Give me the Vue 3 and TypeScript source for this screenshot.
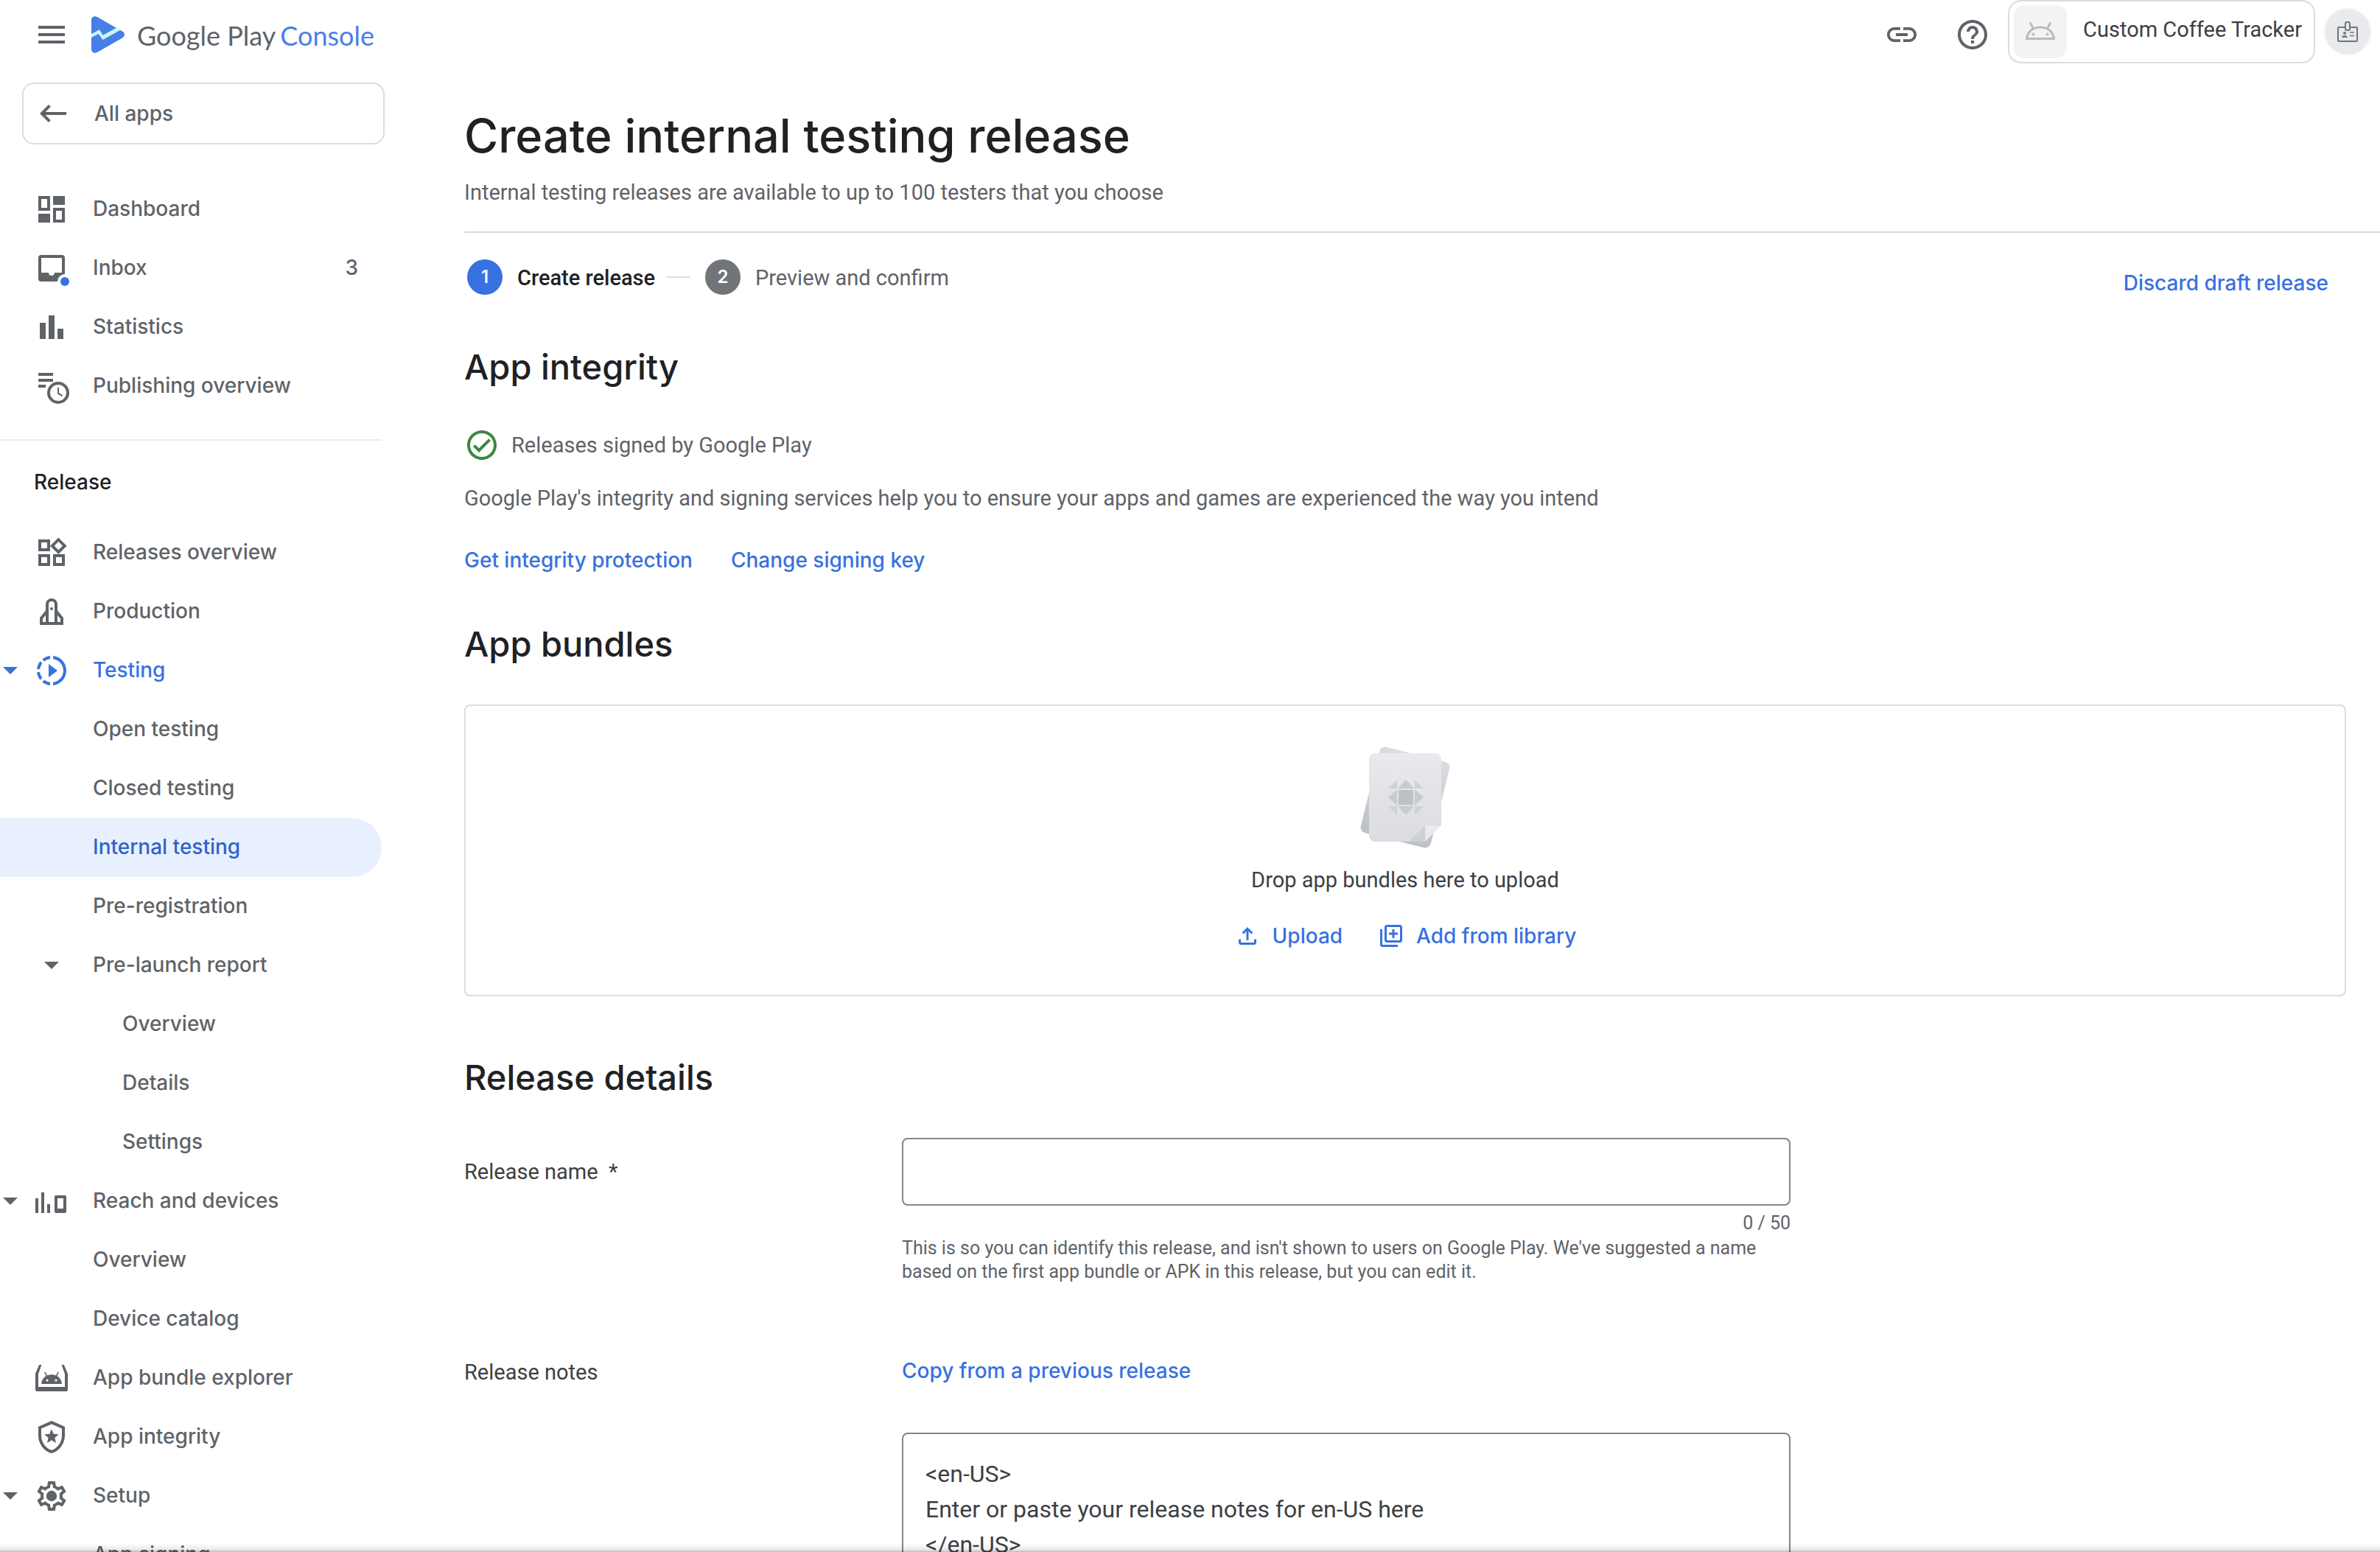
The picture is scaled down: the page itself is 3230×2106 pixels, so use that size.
<script setup lang="ts">
import { ref } from 'vue'

interface NavItem {
  label: string
  icon?: string
  level?: 1 | 2 | 3
  caret?: boolean
  count?: number
  state?: 'open' | 'active'
}

const icons: Record<string, string> = {
  menu: 'M3 18h18v-2H3v2zm0-5h18v-2H3v2zm0-7v2h18V6H3z',
  back: 'M21 11H6.83l3.58-3.59L9 6l-6 6 6 6 1.41-1.41L6.83 13H21v-2z',
  link: 'M3.9 12c0-1.71 1.39-3.1 3.1-3.1h4V7H7c-2.76 0-5 2.24-5 5s2.24 5 5 5h4v-1.9H7c-1.71 0-3.1-1.39-3.1-3.1zM8 13h8v-2H8v2zm9-6h-4v1.9h4c1.71 0 3.1 1.39 3.1 3.1s-1.39 3.1-3.1 3.1h-4V17h4c2.76 0 5-2.24 5-5s-2.24-5-5-5z',
  help: 'M11 18h2v-2h-2v2zm1-16C6.48 2 2 6.48 2 12s4.48 10 10 10 10-4.48 10-10S17.52 2 12 2zm0 18c-4.41 0-8-3.59-8-8s3.59-8 8-8 8 3.59 8 8-3.59 8-8 8zm0-14c-2.21 0-4 1.79-4 4h2c0-1.1.9-2 2-2s2 .9 2 2c0 2-3 1.75-3 5h2c0-2.25 3-2.5 3-5 0-2.21-1.79-4-4-4z',
  dashboard: 'M3 3h8v10H3zM5 5v6h4V5zM13 3h8v6h-8zM3 15h8v6H3zM13 11h8v10h-8zM15 13v6h4v-6z',
  inbox: 'M5 3h14a2 2 0 0 1 2 2v14a2 2 0 0 1-2 2H5a2 2 0 0 1-2-2V5a2 2 0 0 1 2-2zM5 5v10h5a2 2 0 0 0 4 0h5V5z',
  statistics: 'M4 9h4v11H4zM10 4h4v16h-4zM16 13h4v7h-4z',
  publishing: 'M3 3h10v2H3zM3 7h10v2H3zM3 11h5v2H3z',
  releases: 'M16.66 4.52l2.83 2.83-2.83 2.83-2.83-2.83 2.83-2.83M9 5v4H5V5h4m10 10v4h-4v-4h4M9 15v4H5v-4h4m7.66-13.31L11 7.34 16.66 13l5.66-5.66-5.66-5.65zM11 3H3v8h8V3zm10 10h-8v8h8v-8zm-10 0H3v8h8v-8z',
  testing: 'M10 7.5v9L16 12zM11 4.07V2.05c-2.01.2-3.84 1-5.32 2.21L7.1 5.69c1.11-.86 2.44-1.44 3.9-1.62zM5.69 7.1L4.26 5.68C3.05 7.16 2.25 8.99 2.05 11h2.02c.18-1.46.76-2.79 1.62-3.9zM4.07 13H2.05c.2 2.01 1 3.84 2.21 5.32l1.43-1.43c-.86-1.1-1.44-2.43-1.62-3.89zm1.61 6.74C7.16 20.95 9 21.75 11 21.95v-2.02c-1.46-.18-2.79-.76-3.9-1.62l-1.42 1.43zM22 12c0 5.16-3.92 9.42-8.95 9.95v-2.02C16.97 19.41 20 16.05 20 12s-3.03-7.41-6.95-7.93V2.05C18.08 2.58 22 6.84 22 12z',
  reach: 'M1 10h2v10H1zM5 6h2v14H5zM9 14h2v6H9zM15 8h6a1 1 0 0 1 1 1v10a1 1 0 0 1-1 1h-6a1 1 0 0 1-1-1V9a1 1 0 0 1 1-1zM16 10v7h4v-7z',
  bundle: 'M3.6 3h1.6L3 9.2V18h18V9.2L18.8 3h1.6L23 9v11a1 1 0 0 1-1 1H2a1 1 0 0 1-1-1V9zM5 16c.2-2.4 1.4-4.4 3.3-5.5L7 8.1l.7-.4 1.4 2.5a7.5 7.5 0 0 1 5.8 0l1.4-2.5.7.4-1.3 2.4C17.6 11.6 18.8 13.6 19 16zM9 12.7a.8.8 0 1 0 0 1.6.8.8 0 0 0 0-1.6zM15 12.7a.8.8 0 1 0 0 1.6.8.8 0 0 0 0-1.6z',
  integrity: 'M12 1l9 4v6c0 5.55-3.84 10.74-9 12-5.16-1.26-9-6.45-9-12V5zM12 3.2L5 6.3V11c0 4.52 2.98 8.69 7 9.93 4.02-1.24 7-5.41 7-9.93V6.3zM12 6.6l1.35 3.3 3.55.3-2.7 2.33.82 3.47L12 14.15 8.98 16l.82-3.47-2.7-2.33 3.55-.3z',
  setup: 'M19.43 12.98c.04-.32.07-.64.07-.98 0-.34-.03-.66-.07-.98l2.11-1.65c.19-.15.24-.42.12-.64l-2-3.46c-.09-.16-.26-.25-.44-.25-.06 0-.12.01-.17.03l-2.49 1c-.52-.4-1.08-.73-1.69-.98l-.38-2.65C14.46 2.18 14.25 2 14 2h-4c-.25 0-.46.18-.49.42l-.38 2.65c-.61.25-1.17.59-1.69.98l-2.49-1c-.06-.02-.12-.03-.18-.03-.17 0-.34.09-.43.25l-2 3.46c-.13.22-.07.49.12.64l2.11 1.65c-.04.32-.07.65-.07.98 0 .33.03.66.07.98l-2.11 1.65c-.19.15-.24.42-.12.64l2 3.46c.09.16.26.25.44.25.06 0 .12-.01.17-.03l2.49-1c.52.4 1.08.73 1.69.98l.38 2.65c.03.24.24.42.49.42h4c.25 0 .46-.18.49-.42l.38-2.65c.61-.25 1.17-.59 1.69-.98l2.49 1c.06.02.12.03.18.03.17 0 .34-.09.43-.25l2-3.46c.12-.22.07-.49-.12-.64l-2.11-1.65zm-1.98-1.71c.04.31.05.52.05.73 0 .21-.02.43-.05.73l-.14 1.13.89.7 1.08.84-.7 1.21-1.27-.51-1.04-.42-.9.68c-.43.32-.84.56-1.25.73l-1.06.43-.16 1.13-.2 1.35h-1.4l-.19-1.35-.16-1.13-1.06-.43c-.43-.18-.83-.41-1.23-.71l-.91-.7-1.06.43-1.27.51-.7-1.21 1.08-.84.89-.7-.14-1.13c-.03-.31-.05-.54-.05-.74s.02-.43.05-.73l.14-1.13-.89-.7-1.08-.84.7-1.21 1.27.51 1.04.42.9-.68c.43-.32.84-.56 1.25-.73l1.06-.43.16-1.13.2-1.35h1.39l.19 1.35.16 1.13 1.06.43c.43.18.83.41 1.23.71l.91.7 1.06-.43 1.27-.51.7 1.21-1.07.85-.89.7.14 1.13zM12 8.4a3.6 3.6 0 1 0 0 7.2 3.6 3.6 0 0 0 0-7.2z',
  check: 'M12 2C6.48 2 2 6.48 2 12s4.48 10 10 10 10-4.48 10-10S17.52 2 12 2zm0 18c-4.41 0-8-3.59-8-8s3.59-8 8-8 8 3.59 8 8-3.59 8-8 8zm4.59-12.42L10 14.17l-2.59-2.58L6 13l4 4 8-8z',
  upload: 'M18 15v3H6v-3H4v3c0 1.1.9 2 2 2h12c1.1 0 2-.9 2-2v-3h-2zM7 9l1.41 1.41L11 7.83V16h2V7.83l2.59 2.58L17 9l-5-5-5 5z',
  library: 'M4 6H2v14c0 1.1.9 2 2 2h14v-2H4V6zm16-4H8c-1.1 0-2 .9-2 2v12c0 1.1.9 2 2 2h12c1.1 0 2-.9 2-2V4c0-1.1-.9-2-2-2zm0 14H8V4h12v12zm-7-2h2v-3h3V9h-3V6h-2v3h-3v2h3z',
}

const mainItems: NavItem[] = [
  { label: 'Dashboard', icon: 'dashboard' },
  { label: 'Inbox', icon: 'inbox', count: 3 },
  { label: 'Statistics', icon: 'statistics' },
  { label: 'Publishing overview', icon: 'publishing' },
]

const releaseItems: NavItem[] = [
  { label: 'Releases overview', icon: 'releases' },
  { label: 'Production', icon: 'production' },
  { label: 'Testing', icon: 'testing', caret: true, state: 'open' },
  { label: 'Open testing', level: 2 },
  { label: 'Closed testing', level: 2 },
  { label: 'Internal testing', level: 2, state: 'active' },
  { label: 'Pre-registration', level: 2 },
  { label: 'Pre-launch report', level: 2, caret: true },
  { label: 'Overview', level: 3 },
  { label: 'Details', level: 3 },
  { label: 'Settings', level: 3 },
  { label: 'Reach and devices', icon: 'reach', caret: true },
  { label: 'Overview', level: 2 },
  { label: 'Device catalog', level: 2 },
  { label: 'App bundle explorer', icon: 'bundle' },
  { label: 'App integrity', icon: 'integrity' },
  { label: 'Setup', icon: 'setup', caret: true },
  { label: 'App signing', level: 2 },
]

const groups = [
  { title: '', items: mainItems },
  { title: 'Release', items: releaseItems },
]

const releaseName = ref('')
const releaseNotes = ref('<en-US>\nEnter or paste your release notes for en-US here\n</en-US>')
</script>

<template>
  <div class="page">
    <header class="topbar">
      <button class="icon-button" type="button" aria-label="Main menu">
        <svg class="icon" viewBox="0 0 24 24"><path :d="icons.menu" /></svg>
      </button>
      <a class="brand" href="#">
        <svg class="brand-mark" viewBox="0 0 46 50">
          <path
            fill="#487fe7"
            d="M0 5C0 1 4 -1 8 1L42 20.5C46 22.5 46 27 42 29.5L8 49C4 51 0 49 0 45z"
          />
          <path fill="#cdf3fd" d="M0 24L11 18.2L15.7 25.7L34.3 15.4L40 18.6L15.4 32L9.6 24L0 29z" />
        </svg>
        <span class="brand-name"><span>Google Play</span><span class="brand-product">Console</span></span>
      </a>
      <div class="tools">
        <button class="icon-button" type="button" aria-label="Copy link">
          <svg class="icon" viewBox="0 0 24 24"><path :d="icons.link" /></svg>
        </button>
        <button class="icon-button" type="button" aria-label="Help">
          <svg class="icon" viewBox="0 0 24 24"><path :d="icons.help" /></svg>
        </button>
      </div>
      <div class="account">
        <button class="app-card" type="button">
          <span class="app-thumb">
            <svg width="42" height="28" viewBox="0 0 42 28" fill="none" stroke="#b9bbbd" stroke-width="3">
              <path d="M2.5 23.5C3.5 14 11 8 21 8s17.5 6 18.5 15.5z" />
              <path d="M11.5 9.5L7.5 2.5M30.5 9.5l4-7" stroke-linecap="round" />
              <g fill="#b9bbbd" stroke="none">
                <circle cx="11.5" cy="17.500" r="1.900" />
                <circle cx="30.5" cy="17.500" r="1.900" />
              </g>
            </svg>
          </span>
          <span class="app-name">Custom Coffee Tracker</span>
        </button>
        <button class="avatar" type="button" aria-label="Account">
          <svg width="28" height="28" viewBox="0 0 28 28" fill="none" stroke="#717579" stroke-width="2">
            <rect x="1" y="8" width="26" height="19" rx="1" />
            <rect x="11" y="1" width="6" height="11" rx="2" fill="#e8eaed" />
            <path d="M17 15h6M17 19.5h6" stroke-width="1.500" />
            <circle cx="10" cy="16" r="2" fill="#717579" stroke="none" />
            <path d="M6 22c0-4 8-4 8 0z" fill="#717579" stroke="none" />
          </svg>
        </button>
      </div>
    </header>

    <div class="columns">
      <aside class="sidebar">
        <a class="all-apps" href="#">
          <svg class="icon" viewBox="0 0 24 24"><path :d="icons.back" /></svg>
          All apps
        </a>
        <nav v-for="group in groups" :key="group.title" class="nav-group">
          <h2 v-if="group.title" class="nav-title">{{ group.title }}</h2>
          <a
            v-for="(item, i) in group.items"
            :key="i"
            href="#"
            class="nav-item"
            :class="[`level-${item.level ?? 1}`, item.state]"
          >
            <span class="caret-slot">
              <svg v-if="item.caret" class="caret" viewBox="0 0 20 10"><path d="M0 0h20L10 10z" /></svg>
            </span>
            <svg v-if="item.icon" class="icon" viewBox="0 0 24 24">
              <g v-if="item.icon === 'production'" fill="none" stroke="currentColor" stroke-width="2">
                <path d="M9 20V7a3 3 0 0 1 6 0v13M9 11.5L5 16.5V20h14v-3.5L15 11.5" />
                <circle cx="12" cy="10" r="1" fill="currentColor" stroke="none" />
              </g>
              <path v-else fill-rule="evenodd" :d="icons[item.icon]" />
              <g v-if="item.icon === 'inbox'">
                <circle cx="21" cy="21" r="5" fill="#fff" />
                <circle cx="21" cy="21" r="3" fill="#3871e0" />
              </g>
              <g v-if="item.icon === 'publishing'" fill="none" stroke="currentColor">
                <circle cx="16.5" cy="16.5" r="6.5" fill="#fff" stroke-width="2" />
                <path d="M16.5 13v4l2.8 1.5" />
              </g>
            </svg>
            <span class="nav-label">{{ item.label }}</span>
            <span v-if="item.count" class="nav-count">{{ item.count }}</span>
          </a>
        </nav>
      </aside>

      <main class="content">
        <h1>Create internal testing release</h1>
        <p class="subtitle">Internal testing releases are available to up to 100 testers that you choose</p>
        <hr />

        <div class="step-bar">
          <ol class="steps">
            <li class="step current">
              <span class="step-number">1</span><span class="step-label">Create release</span>
            </li>
            <li class="step-line" aria-hidden="true"></li>
            <li class="step">
              <span class="step-number">2</span><span class="step-label">Preview and confirm</span>
            </li>
          </ol>
          <button class="text-button discard" type="button">Discard draft release</button>
        </div>

        <section>
          <h2>App integrity</h2>
          <p class="signed">
            <svg class="icon signed-icon" viewBox="0 0 24 24"><path :d="icons.check" /></svg>
            Releases signed by Google Play
          </p>
          <p class="about">
            Google Play's integrity and signing services help you to ensure your apps and games are experienced the way
            you intend
          </p>
          <div class="actions">
            <button class="text-button" type="button">Get integrity protection</button>
            <button class="text-button" type="button">Change signing key</button>
          </div>
        </section>

        <section class="bundles">
          <h2>App bundles</h2>
          <div class="dropzone">
            <svg width="124" height="140" viewBox="0 0 124 140">
              <defs>
                <linearGradient id="sheet-back" x1="0" y1="0" x2="0" y2="1">
                  <stop offset="0" stop-color="#dadce0" />
                  <stop offset="1" stop-color="#bdc1c6" />
                </linearGradient>
                <linearGradient id="sheet-front" x1="0" y1="0" x2="0" y2="1">
                  <stop offset="0" stop-color="#e8eaed" />
                  <stop offset="1" stop-color="#dadce0" />
                </linearGradient>
              </defs>
              <rect x="13" y="10" width="98" height="120" rx="8" transform="rotate(14 62 70)" fill="url(#sheet-back)" />
              <path d="M21 10h82a8 8 0 0 1 8 8v90l-22 22H21a8 8 0 0 1-8-8V18a8 8 0 0 1 8-8z" fill="url(#sheet-front)" />
              <path d="M89 108h22l-22 22z" fill="#e9eaed" />
              <path d="M89 108v22H67z" fill="#cfd0d4" />
              <path d="M53 60h20v20H53z" fill="#bdc1c6" />
              <path d="M63 46l11 12H52zM63 94l11-12H52zM39 70l12-11v22zM87 70L75 59v22z" fill="#c8cace" />
              <path d="M51 46v12H39zM75 46v12h12zM51 94V82H39zM75 94V82h12z" fill="#cfd1d5" />
            </svg>
            <p class="drop-hint">Drop app bundles here to upload</p>
            <div class="drop-actions">
              <button class="text-button" type="button">
                <svg class="small-icon" viewBox="0 0 24 24"><path :d="icons.upload" /></svg>Upload
              </button>
              <button class="text-button" type="button">
                <svg class="small-icon" viewBox="0 0 24 24"><path :d="icons.library" /></svg>Add from library
              </button>
            </div>
          </div>
        </section>

        <section class="details">
          <h2>Release details</h2>
          <div class="field-row">
            <label class="name-label" for="release-name">Release name &nbsp;*</label>
            <div class="field">
              <input id="release-name" v-model="releaseName" type="text" maxlength="50" />
              <div class="counter">{{ releaseName.length }} / 50</div>
              <p class="hint">
                This is so you can identify this release, and isn't shown to users on Google Play. We've suggested a
                name based on the first app bundle or APK in this release, but you can edit it.
              </p>
            </div>
          </div>
          <div class="field-row notes-row">
            <label for="release-notes">Release notes</label>
            <div class="field">
              <button class="text-button" type="button">Copy from a previous release</button>
              <textarea id="release-notes" v-model="releaseNotes"></textarea>
            </div>
          </div>
        </section>
      </main>
    </div>
    <div class="footer-shadow"></div>
  </div>
</template>

<style>
body {
  margin: 0;
  background: #fff;
}
</style>

<style scoped>
.page {
  height: 100vh;
  overflow: hidden;
  position: relative;
  font: 400 29px/40px Roboto, sans-serif;
  color: #5f6368;
}
.page * {
  box-sizing: border-box;
}
h1,
h2,
p,
ol {
  margin: 0;
  padding: 0;
}
button {
  border: 0;
  padding: 0;
  background: none;
  font: inherit;
  color: inherit;
  cursor: pointer;
}
a {
  color: inherit;
  text-decoration: none;
}
svg {
  display: block;
  flex: none;
}
.icon {
  width: 48px;
  height: 48px;
  fill: currentColor;
  overflow: visible;
}
.small-icon {
  width: 36px;
  height: 36px;
  fill: currentColor;
}

.topbar {
  display: flex;
  align-items: center;
  height: 94px;
  padding: 0 12px 0 46px;
}
.brand {
  display: flex;
  align-items: center;
  gap: 16px;
  margin-left: 30px;
}
.brand-mark {
  width: 46px;
  height: 50px;
}
.brand-name {
  display: flex;
  gap: 6px;
  padding-top: 2px;
  font: 400 36px/48px Lato, sans-serif;
}
.brand-product {
  color: #487fe7;
}
.tools {
  display: flex;
  gap: 48px;
  margin: 0 24px 0 auto;
}
.account {
  display: flex;
  align-items: center;
  gap: 12px;
  align-self: flex-start;
}
.app-card {
  display: flex;
  align-items: center;
  gap: 22px;
  padding: 5px 16px 5px 6px;
  border: 2px solid #dadce0;
  border-radius: 18px;
}
.app-thumb {
  display: flex;
  align-items: center;
  justify-content: center;
  width: 72px;
  height: 72px;
  border-radius: 14px;
  background: #f1f3f4;
}
.app-name {
  padding-bottom: 6px;
  color: #3c4043;
}
.avatar {
  display: flex;
  align-items: center;
  justify-content: center;
  width: 64px;
  height: 64px;
  border: 2px solid #f1f1f1;
  border-radius: 50%;
  background: #e8eaed;
}

.columns {
  display: flex;
}
.sidebar {
  flex: 0 0 570px;
  padding-top: 18px;
  font: 500 28px/40px Inter, sans-serif;
}
.all-apps {
  display: flex;
  align-items: center;
  gap: 32px;
  width: 492px;
  height: 84px;
  margin: 0 0 48px 30px;
  padding: 0 16px;
  border: 2px solid #dadce0;
  border-radius: 16px;
}
.nav-group {
  width: 518px;
}
.nav-group + .nav-group {
  margin-top: 32px;
  border-top: 2px solid #e8eaed;
}
.nav-title {
  padding: 36px 46px;
  font: inherit;
  color: #202124;
}
.nav-item {
  display: flex;
  align-items: center;
  height: 80px;
  border-radius: 0 40px 40px 0;
}
.caret-slot {
  width: 46px;
  flex: none;
}
.caret {
  width: 20px;
  height: 10px;
  margin-left: 4px;
  fill: currentColor;
}
.nav-label,
.nav-count {
  padding-bottom: 2px;
}
.nav-label {
  margin-left: 32px;
}
.level-2 .nav-label {
  margin-left: 80px;
}
.level-2 .caret {
  margin-left: 60px;
}
.level-3 .nav-label {
  margin-left: 120px;
}
.nav-count {
  margin: 0 32px 0 auto;
}
.open {
  color: #3871e0;
}
.active {
  color: #2f63c9;
  background: #e8f0fe;
}

.content {
  flex: 1;
  min-width: 0;
  padding: 50px 0 0 60px;
}
h1 {
  font: 500 63px/80px Inter, sans-serif;
  color: #202124;
}
.content h2 {
  font: 500 47px/64px Inter, sans-serif;
  color: #202124;
}
.subtitle {
  margin-top: 17px;
}
hr {
  height: 2px;
  margin: 33px 0 36px;
  border: 0;
  background: #dadce0;
}
.step-bar {
  display: flex;
  align-items: flex-start;
  justify-content: space-between;
  height: 64px;
  margin-bottom: 50px;
  padding: 0 70px 0 4px;
}
.steps {
  display: flex;
  align-items: center;
  list-style: none;
}
.step {
  display: flex;
  align-items: center;
  gap: 20px;
}
.current {
  font-weight: 500;
  color: #202124;
}
.step-number {
  width: 48px;
  height: 48px;
  border-radius: 50%;
  background: #717579;
  color: #fff;
  font: 600 24px/48px Inter, sans-serif;
  text-align: center;
}
.step-label {
  padding-top: 2px;
}
.current .step-number {
  background: #3871e0;
}
.step-line {
  width: 32px;
  height: 2px;
  margin: 0 20px 0 16px;
  background: #dadce0;
}
.text-button {
  display: flex;
  align-items: center;
  gap: 16px;
  font: 500 28px/40px Inter, sans-serif;
  color: #3871e0;
}
.discard {
  margin-top: 12px;
}
.signed {
  display: flex;
  align-items: center;
  gap: 16px;
  height: 48px;
  margin-top: 50px;
}
.signed-icon {
  color: #3c8842;
}
.about {
  margin: 28px 0 44px;
}
.actions {
  display: flex;
  gap: 52px;
}
.bundles {
  margin-top: 62px;
}
.dropzone {
  display: flex;
  flex-direction: column;
  align-items: center;
  margin: 50px 46px 0 0;
  padding: 54px 0 60px;
  border: 2px solid #dadce0;
  border-radius: 8px;
}
.drop-hint {
  margin: 22px 0 36px;
  color: #3c4043;
}
.drop-actions {
  display: flex;
  gap: 48px;
}
.details {
  margin-top: 78px;
}
.field-row {
  display: flex;
  align-items: flex-start;
  margin-top: 50px;
  color: #3c4043;
}
.field-row label {
  flex: 0 0 594px;
  padding-top: 2px;
}
.field-row .name-label {
  padding-top: 26px;
}
.field {
  flex: 0 1 1206px;
}
.field input {
  display: block;
  width: 100%;
  height: 92px;
  padding: 0 30px;
  border: 2px solid #80868b;
  border-radius: 8px;
  background: #fff;
  font: 400 32px/48px Roboto, sans-serif;
  color: #3c4043;
}
.counter,
.hint {
  font-size: 25px;
  line-height: 32px;
  color: #5f6368;
}
.counter {
  margin-top: 8px;
  text-align: right;
}
.hint {
  margin-top: 2px;
}
.field-row.notes-row {
  margin-top: 98px;
}
.field textarea {
  display: block;
  width: 100%;
  height: 240px;
  margin-top: 64px;
  padding: 30px;
  border: 2px solid #80868b;
  border-radius: 8px;
  background: #fff;
  font: 400 32px/48px Roboto, sans-serif;
  color: #3c4043;
  resize: none;
}
.footer-shadow {
  position: absolute;
  left: 0;
  right: 0;
  bottom: 0;
  height: 12px;
  background: linear-gradient(rgba(0, 0, 0, 0), rgba(0, 0, 0, 0.08) 70%, rgba(0, 0, 0, 0.26));
}
</style>
